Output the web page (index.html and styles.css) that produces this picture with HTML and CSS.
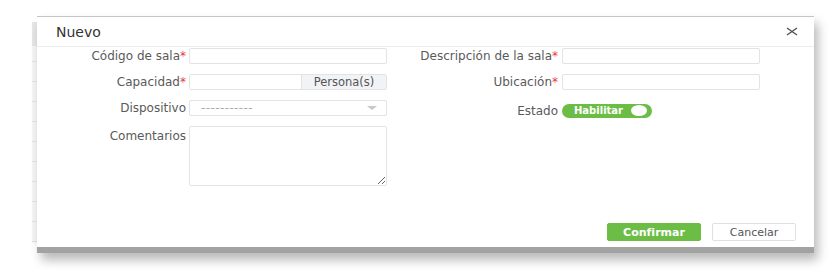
FILE: index.html
```html
<!DOCTYPE html>
<html lang="es">
<head>
    <meta charset="UTF-8">
    <title>Nuevo</title>
    <link rel="stylesheet" href="styles.css">
</head>

<body>
    <div class="stage">
        <!--fondo que asoma-->
        <div class="behind"></div>

        <!--dialogo-->
        <section class="dlg">
            <header class="dlg-head">
                <h2 class="dlg-tit">Nuevo</h2>
                <a href="#" class="dlg-close">
                    <svg width="12" height="9" viewBox="0 0 12 9">
                        <path d="M1 1 L11 8 M11 1 L1 8" stroke="#555" stroke-width="1.5" fill="none"/>
                    </svg>
                </a>
            </header>

            <div class="dlg-body">
                <label class="lbl">Código de sala<em>*</em></label>
                <input class="fld" type="text">
                <label class="lbl">Descripción de la sala<em>*</em></label>
                <input class="fld" type="text">

                <label class="lbl">Capacidad<em>*</em></label>
                <div class="fld grp">
                    <input type="text">
                    <span class="addon">Persona(s)</span>
                </div>
                <label class="lbl">Ubicación<em>*</em></label>
                <input class="fld" type="text">

                <label class="lbl">Dispositivo</label>
                <div class="fld sel">
                    <span>-----------</span>
                    <i class="caret"></i>
                </div>
                <label class="lbl low">Estado</label>
                <div class="tgl-cell">
                    <span class="tgl">Habilitar<i class="knob"></i></span>
                </div>

                <label class="lbl top">Comentarios</label>
                <textarea class="fld memo"></textarea>
            </div>

            <footer class="dlg-foot">
                <button class="btn ok">Confirmar</button>
                <button class="btn">Cancelar</button>
            </footer>
        </section>
    </div>
</body>
</html>
```

FILE: styles.css
```css
html,
body,
h2 {
    margin: 0;
    padding: 0;
}

body {
    min-height: 272px;
    background-color: #fff;
    font-family: "DejaVu Sans", "Liberation Sans", sans-serif;
    color: #555;
}

/*전체틀*/
.stage {
    display: flex;
    align-items: flex-start;
    padding: 16px 0 19px 32px;
}

/*뒤에 보이는 표*/
.behind {
    width: 5px;
    height: 221px;
    margin-top: 6px;
    background:
        linear-gradient(#e6e6e6, #e6e6e6) 0 0 / 100% 24px no-repeat,
        repeating-linear-gradient(#f5f5f5 0, #f5f5f5 19px, #e4e4e4 19px, #e4e4e4 20px);
}

/*다이얼로그*/
.dlg {
    display: flex;
    flex-direction: column;
    width: 777px;
    height: 230px;
    background-color: #fff;
    border-top: 1px solid #c4c4c4;
    border-bottom: 6px solid #a2a2a2;
    box-shadow: 4px 7px 10px rgba(0, 0, 0, .28);
}

.dlg-head {
    display: flex;
    align-items: center;
    justify-content: space-between;
    height: 29px;
    padding: 0 16px 0 19px;
    border-bottom: 1px solid #ececec;
}

.dlg-tit {
    font-size: 14px;
    font-weight: normal;
    color: #333;
}

.dlg-close {
    display: flex;
}

/*폼*/
.dlg-body {
    display: grid;
    grid-template-columns: 152px 198px 175px 198px;
    grid-auto-rows: 16px;
    row-gap: 10px;
    padding-top: 1px;
}

.lbl {
    align-self: center;
    padding-right: 3px;
    text-align: right;
    font-size: 12px;
    line-height: 16px;
    color: #5a5a5a;
}

.lbl:nth-of-type(even) {
    padding-right: 4px;
}

.lbl em {
    font-style: normal;
    color: #e83a3a;
}

.lbl.top {
    align-self: start;
    padding-top: 2px;
}

.lbl.low {
    margin-top: 5px;
}

.fld {
    box-sizing: border-box;
    height: 16px;
    margin: 0;
    border: 1px solid #e3e3e3;
    border-radius: 2px;
    background-color: #fff;
}

.grp {
    display: flex;
}

.grp input {
    flex: 1;
    min-width: 0;
    border: 0;
    padding: 0;
}

.addon {
    width: 84px;
    border-left: 1px solid #e3e3e3;
    background-color: #f1f3f7;
    text-align: center;
    font-size: 11.5px;
    line-height: 14px;
    color: #555;
}

.sel {
    display: flex;
    align-items: center;
    justify-content: space-between;
    padding: 0 9px 0 11px;
    font-size: 12px;
    letter-spacing: .4px;
    color: #aaa;
}

.caret {
    border-left: 5px solid transparent;
    border-right: 5px solid transparent;
    border-top: 4px solid #c8c8c8;
}

/*토글*/
.tgl-cell {
    display: flex;
    align-items: center;
    margin-top: 5px;
}

.tgl {
    display: flex;
    align-items: center;
    justify-content: space-between;
    box-sizing: border-box;
    width: 90px;
    height: 14px;
    padding: 0 5px 0 12px;
    border-radius: 7px;
    background-color: #6cbd45;
    color: #fff;
    font-size: 10px;
    font-weight: bold;
}

.knob {
    width: 16px;
    height: 11px;
    border-radius: 50%;
    background-color: #fff;
}

.memo {
    height: 60px;
    resize: both;
}

/*버튼*/
.dlg-foot {
    display: flex;
    justify-content: flex-end;
    gap: 11px;
    margin-top: auto;
    padding: 0 18px 6px 0;
}

.btn {
    width: 84px;
    height: 18px;
    padding: 0;
    border: 1px solid #e0e0e0;
    border-radius: 2px;
    background-color: #fff;
    font-family: "DejaVu Sans", sans-serif;
    font-size: 11px;
    color: #555;
}

.btn.ok {
    width: 94px;
    border-color: #6cbd45;
    background-color: #6cbd45;
    color: #fff;
    font-weight: bold;
}
```
